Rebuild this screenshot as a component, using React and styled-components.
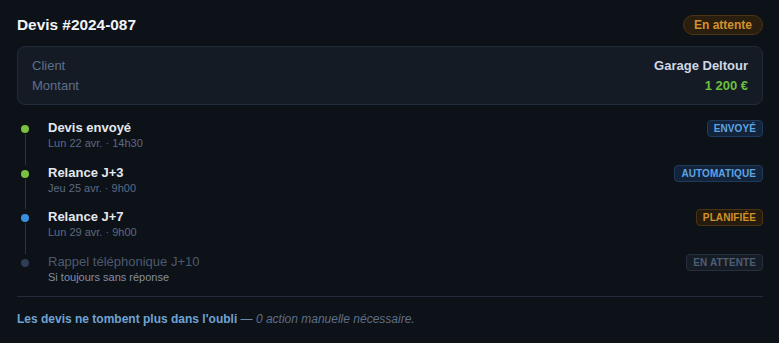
import React from 'react';
import styled, { createGlobalStyle } from 'styled-components';

const GlobalStyle = createGlobalStyle`
  html, body {
    margin: 0;
    padding: 0;
    background: #0d1118;
  }
  body {
    font-family: "Liberation Sans", Arial, sans-serif;
  }
`;

const Panel = styled.div`
  width: 779px;
  height: 343px;
  box-sizing: border-box;
  padding: 14px 16px 0 17px;
  background: #0d1118;
`;

const Header = styled.div`
  display: flex;
  align-items: center;
  justify-content: space-between;
  height: 21px;
`;

const Title = styled.h1`
  margin: 0;
  font-size: 15.4px;
  font-weight: 700;
  color: #f1f4f8;
`;

const Pill = styled.span`
  display: inline-flex;
  align-items: center;
  height: 18px;
  padding: 0 10px;
  border-radius: 10px;
  font-size: 12px;
  font-weight: 700;
  color: #d4912b;
  background: #2a1e0e;
  border: 1px solid #4b3514;
`;

const Card = styled.div`
  margin-top: 11px;
  padding: 9px 14px 8px;
  border-radius: 8px;
  background: #151b25;
  border: 1px solid #212c3b;
`;

const InfoRow = styled.div`
  display: flex;
  justify-content: space-between;
  font-size: 13px;
  line-height: 20px;
`;

const Label = styled.span`
  color: #5d6f88;
`;

const Value = styled.span`
  font-weight: 700;
  color: ${(p) => p.$color || '#cfd8e5'};
`;

const Timeline = styled.ul`
  list-style: none;
  margin: 15px 0 0 0;
  padding: 0;
`;

const Step = styled.li`
  position: relative;
  display: flex;
  justify-content: space-between;
  align-items: flex-start;
  height: ${(p) => (p.$last ? '42px' : '44.5px')};
  padding-left: 31px;
`;

const Rail = styled.span`
  position: absolute;
  left: 4px;
  top: 0;
  bottom: 0;
  width: 8px;
  display: flex;
  flex-direction: column;
  align-items: center;

  &::before {
    content: '';
    width: 8px;
    height: 8px;
    margin-top: 5px;
    border-radius: 50%;
    background: ${(p) => p.$dot};
  }

  &::after {
    content: '';
    flex: 1;
    width: 1px;
    margin-top: 1px;
    background: ${(p) => (p.$last ? 'transparent' : '#2a3444')};
  }
`;

const StepText = styled.div`
  display: flex;
  flex-direction: column;
`;

const StepTitle = styled.span`
  font-size: 13px;
  line-height: 16px;
  font-weight: ${(p) => (p.$muted ? 400 : 700)};
  color: ${(p) => (p.$muted ? '#4c5a6e' : '#e3e8ef')};
`;

const StepMeta = styled.span`
  font-size: 11px;
  line-height: 14px;
  color: ${(p) => (p.$muted ? '#8090a6' : '#5b6b82')};
`;

const tones = {
  blue: { bg: '#12233a', border: '#1e3a5c', color: '#5fa3e2' },
  amber: { bg: '#261c0e', border: '#4a3314', color: '#d39129' },
  gray: { bg: '#161c26', border: '#262f3d', color: '#4e5d73' },
};

const Tag = styled.span`
  display: inline-flex;
  align-items: center;
  height: 15px;
  padding: 0 6px;
  border-radius: 4px;
  font-size: 10px;
  font-weight: 700;
  letter-spacing: 0.1px;
  background: ${(p) => tones[p.$tone].bg};
  border: 1px solid ${(p) => tones[p.$tone].border};
  color: ${(p) => tones[p.$tone].color};
`;

const Divider = styled.hr`
  margin: 0;
  border: 0;
  border-top: 1px solid #222c3a;
`;

const Footer = styled.p`
  margin: 15px 0 0 0;
  font-size: 12px;
  line-height: 14px;
  color: #6f8aa6;

  strong {
    color: #6fa3d3;
  }

  em {
    color: #5e6f87;
  }
`;

const steps = [
  { title: 'Devis envoyé', meta: 'Lun 22 avr. · 14h30', dot: '#7ac142', tag: 'ENVOYÉ', tone: 'blue' },
  { title: 'Relance J+3', meta: 'Jeu 25 avr. · 9h00', dot: '#7ac142', tag: 'AUTOMATIQUE', tone: 'blue' },
  { title: 'Relance J+7', meta: 'Lun 29 avr. · 9h00', dot: '#3b8fe0', tag: 'PLANIFIÉE', tone: 'amber' },
  { title: 'Rappel téléphonique J+10', meta: 'Si toujours sans réponse', dot: '#2e3d55', tag: 'EN ATTENTE', tone: 'gray', muted: true },
];

const App = () => {
  return (
    <>
      <GlobalStyle />
      <Panel>
        <Header>
          <Title>Devis #2024-087</Title>
          <Pill>En attente</Pill>
        </Header>
        <Card>
          <InfoRow>
            <Label>Client</Label>
            <Value>Garage Deltour</Value>
          </InfoRow>
          <InfoRow>
            <Label>Montant</Label>
            <Value $color="#6cbf3f">1 200 €</Value>
          </InfoRow>
        </Card>
        <Timeline>
          {steps.map((s, i) => {
            const last = i === steps.length - 1;
            return (
              <Step key={s.title} $last={last}>
                <Rail $dot={s.dot} $last={last} />
                <StepText>
                  <StepTitle $muted={s.muted}>{s.title}</StepTitle>
                  <StepMeta $muted={s.muted}>{s.meta}</StepMeta>
                </StepText>
                <Tag $tone={s.tone}>{s.tag}</Tag>
              </Step>
            );
          })}
        </Timeline>
        <Divider />
        <Footer>
          <strong>Les devis ne tombent plus dans l'oubli</strong> — <em>0 action manuelle nécessaire.</em>
        </Footer>
      </Panel>
    </>
  );
};

export default App;
